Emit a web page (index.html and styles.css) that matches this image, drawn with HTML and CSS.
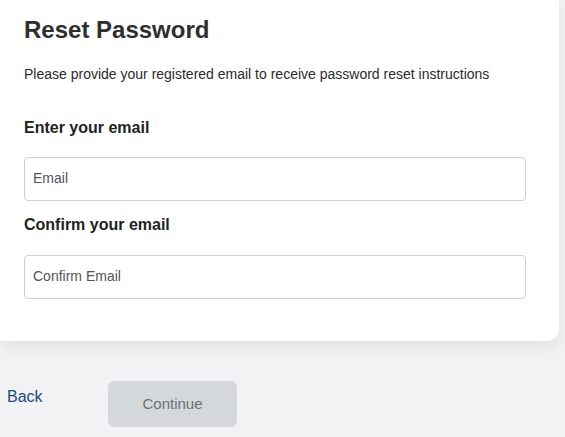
FILE: index.html
```html
<!DOCTYPE html>
<html lang="en">
<head>
<meta charset="utf-8">
<title>Reset Password</title>
<link rel="stylesheet" href="styles.css">
</head>
<body>
<div class="page">
  <div class="card">
    <h1 class="title">Reset Password</h1>
    <p class="desc">Please provide your registered email to receive password reset instructions</p>
    <label class="label first" for="email">Enter your email</label>
    <input class="field" id="email" type="email" placeholder="Email">
    <label class="label" for="confirm">Confirm your email</label>
    <input class="field" id="confirm" type="email" placeholder="Confirm Email">
  </div>
  <div class="actions">
    <a class="back" href="#">Back</a>
    <button class="continue" type="button" disabled>Continue</button>
  </div>
</div>
</body>
</html>
```

FILE: styles.css
```css
html, body {
  margin: 0;
  padding: 0;
  height: 100%;
  background: #f0f2f4;
  font-family: "Liberation Sans", Arial, sans-serif;
  overflow: hidden;
}

.page {
  display: flex;
  flex-direction: column;
}

.card {
  width: 559px;
  box-sizing: border-box;
  background: #ffffff;
  border-radius: 0 0 12px 0;
  padding: 16px 33px 42px 24px;
  box-shadow: 0 6px 18px rgba(0, 0, 0, 0.07);
  display: flex;
  flex-direction: column;
}

.title {
  margin: 0;
  font-size: 24px;
  line-height: 28px;
  font-weight: bold;
  color: #2e2e2e;
}

.desc {
  margin: 19.5px 0 0 0;
  font-size: 14px;
  line-height: 20px;
  color: #2b2b2b;
}

.label {
  display: block;
  margin: 14.5px 0 19.5px 0;
  font-size: 16px;
  line-height: 20px;
  font-weight: bold;
  color: #222;
}

.label.first {
  margin-top: 34.5px;
  margin-bottom: 18.5px;
}

.field {
  display: block;
  width: 502px;
  height: 44px;
  box-sizing: border-box;
  margin: 0;
  padding: 0 8px 2px 8px;
  border: 1px solid #cfcfcf;
  border-radius: 4px;
  font-family: "Liberation Sans", Arial, sans-serif;
  font-size: 14px;
  color: #333;
  background: #fff;
  outline: none;
}

.field::placeholder {
  color: #555;
  opacity: 1;
}

.actions {
  display: flex;
  align-items: flex-start;
  margin-top: 40px;
  padding-left: 7px;
}

.back {
  padding-top: 6.5px;
  font-size: 16px;
  line-height: 20px;
  color: #1d4a7c;
  text-decoration: none;
  width: 101px;
}

.continue {
  width: 129px;
  height: 46px;
  border: none;
  border-radius: 6px;
  background: #d5d8db;
  color: #6b7079;
  font-family: "Liberation Sans", Arial, sans-serif;
  font-size: 15px;
  padding: 0;
}
```
